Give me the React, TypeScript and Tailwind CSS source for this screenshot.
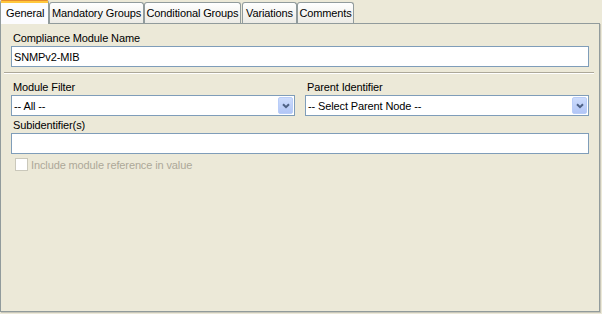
import React from "react";

const font = { fontFamily: '"Liberation Sans", Arial, sans-serif' };

function Tab({ label, selected, w, className = "" }: { label: string; selected?: boolean; w: string; className?: string }) {
  if (selected) {
    return (
      <div className={`${w} h-[24px] flex flex-col bg-[#FCFCFE] border-l border-r border-[#919B9C] rounded-t-[3px] relative z-10 ${className}`}>
        <div className="h-[1px] bg-[#E68B2C] rounded-t-[3px]" />
        <div className="h-[2px] bg-[#FFC73C]" />
        <div className="flex-1 flex items-center pl-[5px] text-[11px] leading-[14px] text-black pb-[2px]">{label}</div>
      </div>
    );
  }
  return (
    <div className={`${w} h-[21px] flex items-center justify-center border border-b-0 border-[#919B9C] rounded-t-[3px] bg-gradient-to-b from-white to-[#ECEBE5] text-[11px] leading-[14px] text-black pb-[1px] ${className}`}>
      {label}
    </div>
  );
}

function Label({ children, className = "" }: { children: React.ReactNode; className?: string }) {
  return <div className={`h-[14px] leading-[14px] text-[11px] text-black pl-[2px] ${className}`}>{children}</div>;
}

function Combo({ value }: { value: string }) {
  return (
    <div className="h-[21px] flex items-center border border-[#7F9DB9] bg-white p-[1px]">
      <div className="flex-1 text-[11px] leading-[14px] text-black pl-[1px]">{value}</div>
      <div className="w-[15px] h-[17px] rounded-[2px] border border-[#B9CDF8] bg-gradient-to-b from-[#CDDCFC] to-[#B2C6F6] flex items-center justify-center">
        <svg width="8" height="6" viewBox="0 0 8 6">
          <path d="M1 1.2 L4 4.2 L7 1.2" fill="none" stroke="#4D6185" strokeWidth="2" />
        </svg>
      </div>
    </div>
  );
}

export default function App() {
  return (
    <div className="w-[602px] h-[314px] bg-[#ECE9D8] flex flex-col tracking-[-0.12px]" style={font}>
      <div className="h-[23px] flex items-end">
        <Tab label="General" selected w="w-[49px]" className="self-start" />
        <Tab label="Mandatory Groups" w="w-[95px]" />
        <Tab label="Conditional Groups" w="w-[97px]" />
        <Tab label="Variations" w="w-[55px]" className="ml-[1px]" />
        <Tab label="Comments" w="w-[57px]" />
      </div>
      <div className="w-[600px] h-[289px] border border-[#919B9C] bg-[#ECE9D8] shadow-[1px_1px_0_#C9C7BA] flex flex-col">
        <div className="px-[10px] pt-[7px]">
          <Label>Compliance Module Name</Label>
          <div className="mt-[1px] h-[21px] border border-[#7F9DB9] bg-white flex items-center pl-[2px] text-[11px] leading-[14px] text-black">
            SNMPv2-MIB
          </div>
        </div>
        <div className="ml-[3px] mr-[5px] mt-[5px] h-[2px] flex flex-col">
          <div className="h-[1px] bg-[#ACA899]" />
          <div className="h-[1px] bg-white" />
        </div>
        <div className="px-[10px] pt-[6px]">
          <div className="grid grid-cols-2 gap-x-[10px]">
            <div className="flex flex-col">
              <Label>Module Filter</Label>
              <div className="mt-[1px]"><Combo value="-- All --" /></div>
            </div>
            <div className="flex flex-col">
              <Label className="pl-[1px]">Parent Identifier</Label>
              <div className="mt-[1px]"><Combo value="-- Select Parent Node --" /></div>
            </div>
          </div>
          <Label className="mt-[2px]">Subidentifier(s)</Label>
          <div className="mt-[1px] h-[21px] border border-[#7F9DB9] bg-white" />
          <div className="mt-[4px] flex items-center pl-[4px] h-[13px]">
            <div className="w-[13px] h-[13px] border border-[#CAC8BB] bg-white" />
            <div className="ml-[3px] text-[11px] leading-[14px] text-[#ACA899]">Include module reference in value</div>
          </div>
        </div>
      </div>
    </div>
  );
}
